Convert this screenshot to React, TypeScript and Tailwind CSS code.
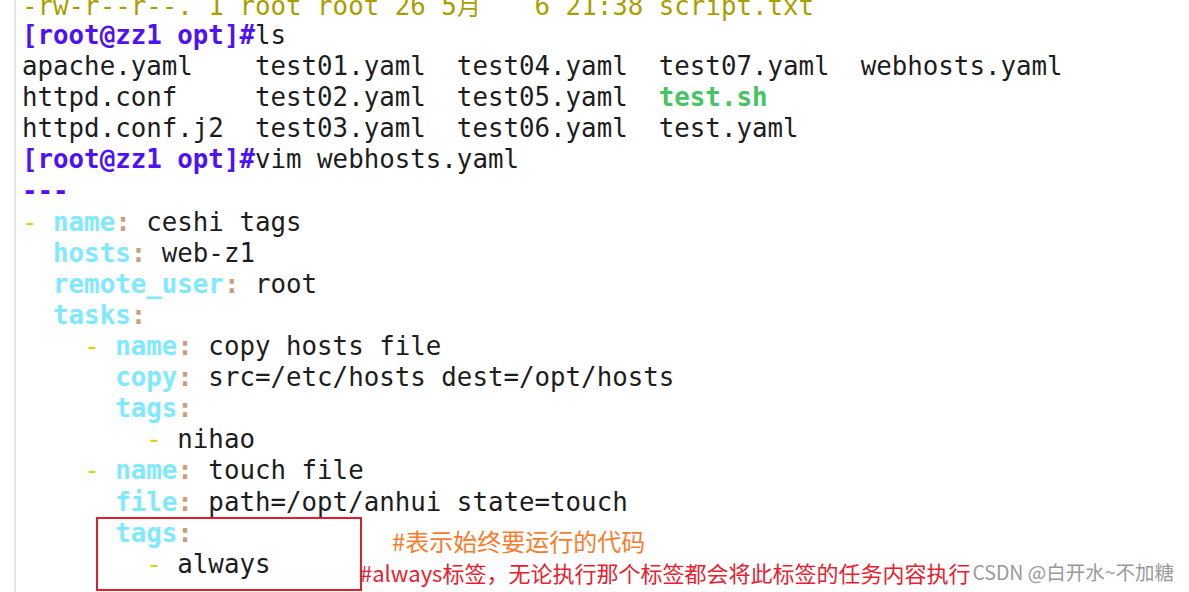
import React from 'react';

type Seg = { t: string; c?: string; b?: boolean; wide?: boolean };

const OLIVE = 'text-[#a89f00]';
const PROMPT = 'text-[#4f12f5]';
const KEY = 'text-[#7ee9ff]';
const COLON = 'text-[#c9a07c]';
const DASH = 'text-[#d6d600]';
const GREEN = 'text-[#46c463]';

const prompt: Seg = { t: '[root@zz1 opt]#', c: PROMPT, b: true };

// key: value helper for yaml lines
const kv = (indent: string, key: string, value = '', dash = false): Seg[] => {
  const segs: Seg[] = [];
  if (dash) {
    segs.push({ t: indent.slice(0, -2) });
    segs.push({ t: '-', c: DASH });
    segs.push({ t: ' ' });
  } else {
    segs.push({ t: indent });
  }
  segs.push({ t: key, c: KEY, b: true });
  segs.push({ t: ':', c: COLON, b: true });
  if (value) segs.push({ t: ' ' + value });
  return segs;
};

const item = (indent: string, value: string): Seg[] => [
  { t: indent },
  { t: '-', c: DASH },
  { t: ' ' + value },
];

const lines: Seg[][] = [
  [
    { t: '-rw-r--r--. 1 root root 26 5', c: OLIVE },
    { t: '月', wide: true },
    { t: '   6 21:38 script.txt', c: OLIVE },
  ],
  [prompt, { t: 'ls' }],
  [{ t: 'apache.yaml    test01.yaml  test04.yaml  test07.yaml  webhosts.yaml' }],
  [{ t: 'httpd.conf     test02.yaml  test05.yaml  ' }, { t: 'test.sh', c: GREEN, b: true }],
  [{ t: 'httpd.conf.j2  test03.yaml  test06.yaml  test.yaml' }],
  [prompt, { t: 'vim webhosts.yaml' }],
  [{ t: '---', c: PROMPT, b: true }],
  kv('  ', 'name', 'ceshi tags', true),
  kv('  ', 'hosts', 'web-z1'),
  kv('  ', 'remote_user', 'root'),
  kv('  ', 'tasks'),
  kv('      ', 'name', 'copy hosts file', true),
  kv('      ', 'copy', 'src=/etc/hosts dest=/opt/hosts'),
  kv('      ', 'tags'),
  item('        ', 'nihao'),
  kv('      ', 'name', 'touch file', true),
  kv('      ', 'file', 'path=/opt/anhui state=touch'),
  kv('      ', 'tags'),
  item('        ', 'always'),
];

const Line = ({ segs }: { segs: Seg[] }) => (
  <div className="h-[31.1px]">
    {segs.map((s, i) =>
      s.wide ? (
        // CJK glyph takes two terminal cells
        <span
          key={i}
          className="inline-block w-[31.1px] text-[#a89f00] font-['Noto_Sans_CJK_SC',sans-serif] text-[24px]"
        >
          {s.t}
        </span>
      ) : (
        <span key={i} className={(s.c ?? '') + (s.b ? ' font-bold' : '')}>
          {s.t}
        </span>
      )
    )}
  </div>
);

const App = () => {
  return (
    <div className="relative h-[592px] w-[1189px] overflow-hidden bg-white">
      {/* terminal text */}
      <div className="ml-[14px] mt-[-11px] min-h-[620px] border-l-2 border-[#e6e6e6] pl-[6px] font-['DejaVu_Sans_Mono',monospace] text-[25.8px] leading-[31.1px] whitespace-pre text-[#1d1d1d]">
        {lines.map((segs, i) => (
          <Line key={i} segs={segs} />
        ))}
      </div>

      {/* highlight box */}
      <div className="absolute left-[96px] top-[517px] h-[74px] w-[266px] border-2 border-[#dd1f2f]" />

      {/* annotations */}
      <div className="absolute left-[392px] top-[528px] font-['Noto_Sans_CJK_SC',sans-serif] text-[24px] leading-[26px] text-[#f97c2d] whitespace-nowrap">
        #表示始终要运行的代码
      </div>
      <div className="absolute left-[360px] top-[559px] flex items-center whitespace-nowrap font-['Noto_Sans_CJK_SC',sans-serif] leading-[26px]">
        <span className="text-[22px] text-[#e8202f]">#always标签，无论执行那个标签都会将此标签的任务内容执行</span>
        <span className="ml-[2px] text-[19.5px] text-[#9a9a9a]">CSDN @白开水~不加糖</span>
      </div>
    </div>
  );
};

export default App;
